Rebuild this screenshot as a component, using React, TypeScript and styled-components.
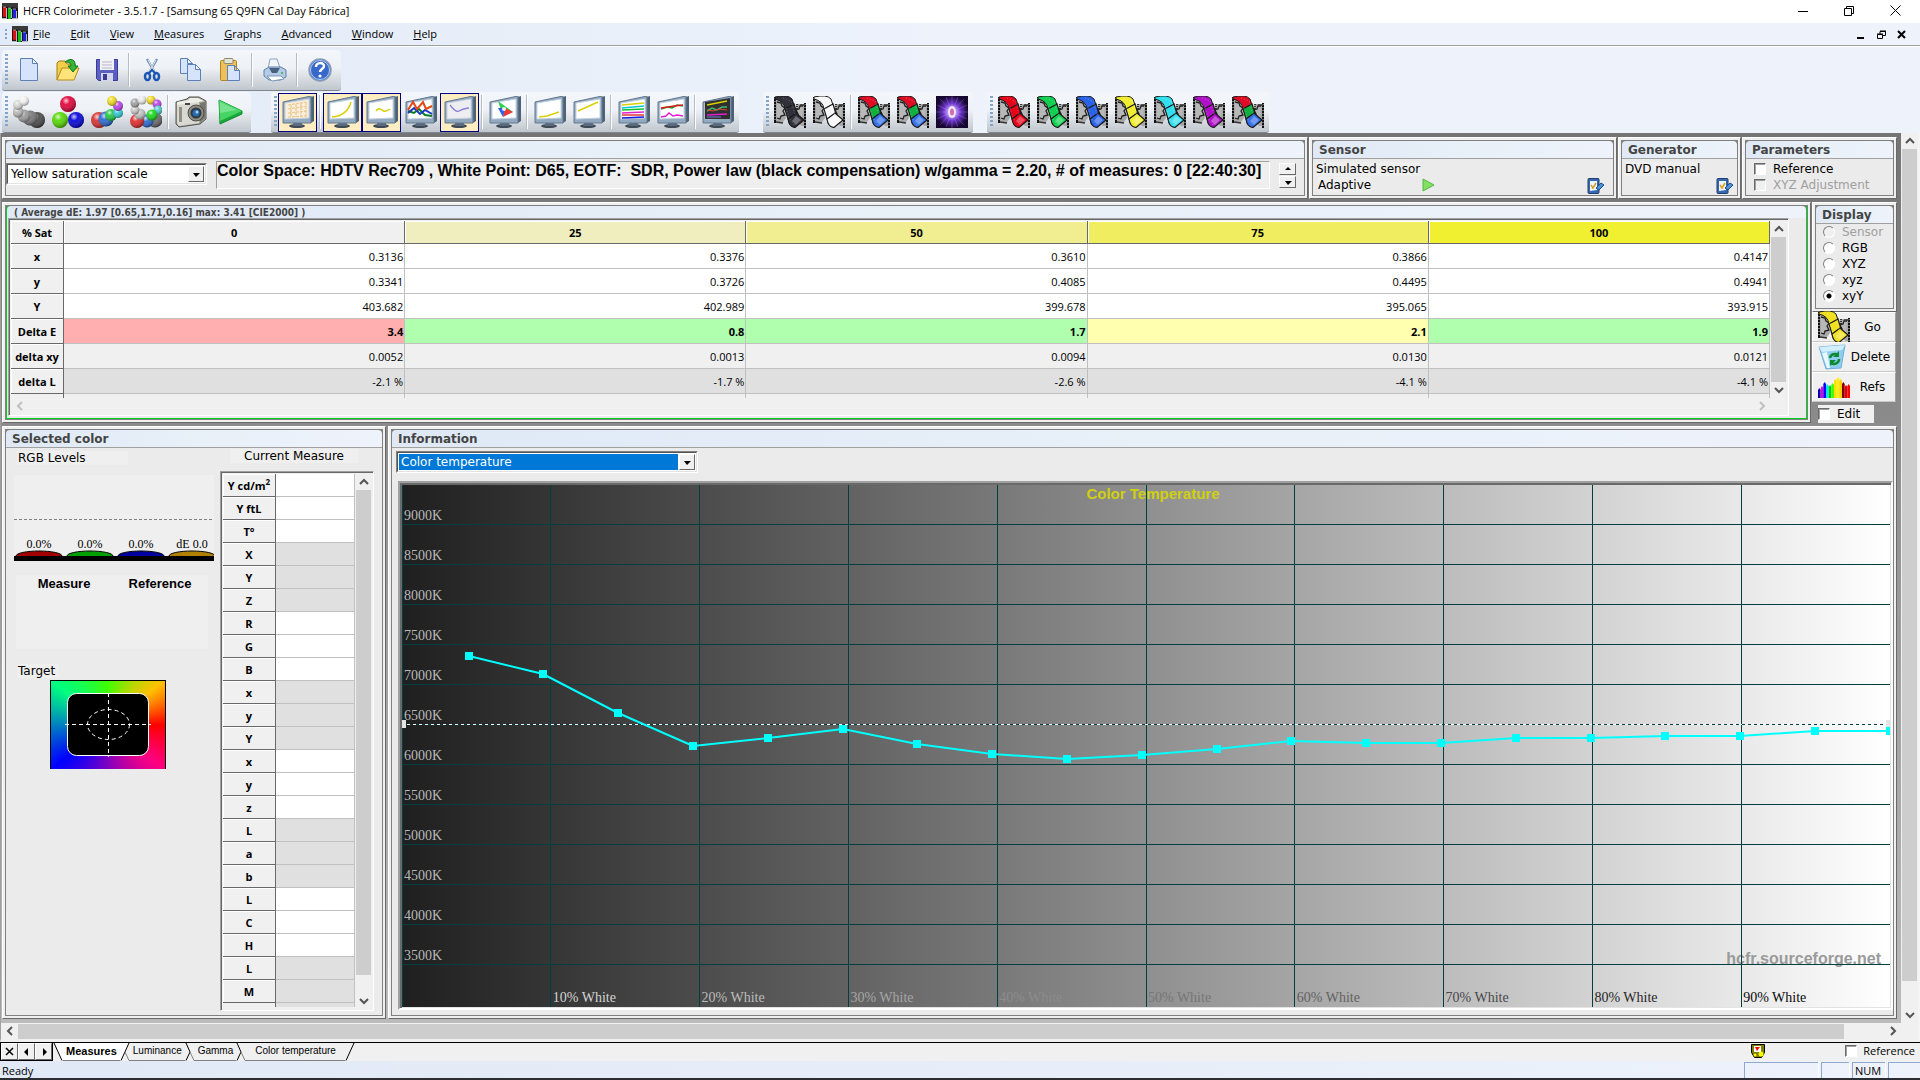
import React, { useEffect, useId, useRef, useState } from "react";
import styled, { createGlobalStyle, css } from "styled-components";

const UI = '"Open Sans", "Noto Sans", sans-serif';
const DIALOG = '"DejaVu Sans", sans-serif';
const ARIAL = '"Liberation Sans", sans-serif';
const SERIF = '"Liberation Serif", serif';

const GlobalStyle = createGlobalStyle`
  * { box-sizing: border-box; }
  body { margin: 0; background: #f0f0f0; color: #000; font-family: ${UI}; font-size: 11px; }
  button, select, input { font: inherit; color: inherit; margin: 0; }
  button { padding: 0; border: 0; background: none; }
  svg { display: block; }
`;

/* ---------- window frame ---------- */

const Window = styled.div`
  display: flex;
  flex-direction: column;
  min-height: 100vh;
`;

const TitleBar = styled.header`
  display: flex;
  align-items: center;
  height: 23px;
  padding: 0 0 2px 2px;
  background: #fff;
`;

const Title = styled.h1`
  flex: 1;
  margin: 0;
  padding-left: 5px;
  font-size: 11px;
  font-weight: 400;
`;

const CaptionButton = styled.button`
  display: grid;
  place-items: center;
  width: 46px;
  height: 20px;
`;

const CaptionGroup = styled.div`
  display: flex;
  padding-right: 2px;
`;

const MenuBar = styled.nav`
  display: flex;
  align-items: center;
  height: 24px;
  padding: 0 9px 1px 5px;
  border-bottom: 1px solid #fff;
  box-shadow: inset 0 -1px #a0a0a0;
  background: linear-gradient(90deg, #e2ebf7, #edf2fb 50%);
`;

const MenuItems = styled.div`
  display: flex;
  flex: 1;
  gap: 20px;
  padding-left: 5px;
`;

const MenuItem = styled.button`
  font-size: 11px;
  line-height: 16px;
  &::first-letter { text-decoration: underline; }
`;

const MdiButton = styled.button`
  display: grid;
  place-items: center;
  width: 20px;
  height: 16px;
`;

/* ---------- toolbars ---------- */

const ToolArea = styled.div`
  display: grid;
  gap: 1px;
  padding: 3px 2px 0;
  background: linear-gradient(90deg, #e2ebf7, #edf2fb 50%);
`;

const ToolLine = styled.div`
  display: flex;
`;

const ToolGroup = styled.div<{ $gap?: number }>`
  display: flex;
  align-items: center;
  height: 41px;
  margin-left: ${(p) => p.$gap ?? 0}px;
  padding-right: 2px;
  border-bottom: 1px solid #7f868e;
  border-radius: 4px 4px 3px 3px;
  background: linear-gradient(#f3f6fb, #eef1f5 45%, #bfc6cd);
`;

const Grip = styled.span`
  width: 3px;
  height: 32px;
  margin: 0 1px 0 3px;
  background: repeating-linear-gradient(#7fa5cc 0 2px, transparent 2px 4px);
`;

const ToolButton = styled.button<{ $on?: boolean }>`
  display: grid;
  place-items: center;
  width: 39px;
  height: 39px;
  ${(p) => p.$on && css`
    border: 1px solid #000080;
    background: #ffedc2;
  `}
`;

const ToolGap = styled.span`
  width: 1px;
  height: 34px;
  margin: 0 3px 0 2px;
  background: #b5bcc4;
  box-shadow: 1px 0 #fff;
`;

/* ---------- workspace ---------- */

const Workspace = styled.main`
  display: flex;
  flex: 1;
  flex-direction: column;
  border-left: 1px solid #a0a0a0;
  border-right: 2px solid #f4f4f4;
  border-bottom: 3px solid #f0f0f0;
`;

const WorkspaceBody = styled.div`
  display: flex;
  flex: 1;
`;

const Panes = styled.div`
  display: flex;
  flex: 1;
  min-width: 0;
  flex-direction: column;
  gap: 3px;
  padding: 4px 4px 4px 1px;
  background: linear-gradient(#747474, #bbb);
`;

const PaneRow = styled.div<{ $grow?: boolean; $gap?: number }>`
  display: flex;
  flex: ${(p) => (p.$grow ? "1 0 auto" : "none")};
  gap: ${(p) => p.$gap ?? 1}px;
`;

const PanelOuter = styled.section<{ $width?: number }>`
  display: flex;
  flex: ${(p) => (p.$width ? `0 0 ${p.$width}px` : "1 1 0")};
  min-width: 0;
  padding: 2px;
  border: 1px solid;
  border-color: #fff #696969 #696969 #fff;
  background: #f0f0f0;
`;

const PanelInner = styled.div<{ $accent?: boolean }>`
  display: flex;
  flex: 1;
  min-width: 0;
  flex-direction: column;
  border: 1px solid #808080;
  background: #808080;
  ${(p) => p.$accent && css`
    box-shadow: inset 1px 0 #00d020, inset -1px -1px #00d020;
    padding: 0 1px 1px;
  `}
`;

const PanelTitle = styled.h2<{ $small?: boolean }>`
  flex: none;
  height: ${(p) => (p.$small ? 12 : 18)}px;
  margin: 0;
  padding-left: ${(p) => (p.$small ? 7 : 6)}px;
  overflow: hidden;
  border-bottom: ${(p) => (p.$small ? 0 : 1)}px solid #a0a0a0;
  border-radius: 4px 4px 0 0;
  background: linear-gradient(90deg, #dfe9f6, #e8f0f8 50%, #eef2fb);
  color: #444;
  font: 700 12px/18px ${DIALOG};
  white-space: nowrap;
  ${(p) => p.$small && css`
    font: 700 10px/14px "DejaVu Sans Condensed", ${DIALOG};
  `}
`;

const PanelBody = styled.div`
  flex: 1;
  min-width: 0;
  background: #ebebeb;
  font: 12px/16px ${DIALOG};
`;

function Panel(props: { title: string; width?: number; accent?: boolean; children: React.ReactNode }) {
  return (
    <PanelOuter $width={props.width}>
      <PanelInner $accent={props.accent}>
        <PanelTitle $small={props.accent}>{props.title}</PanelTitle>
        {props.children}
      </PanelInner>
    </PanelOuter>
  );
}

/* ---------- form controls ---------- */

const SelectBox = styled.div<{ $width: number }>`
  position: relative;
  width: ${(p) => p.$width}px;
  height: 22px;
  border: 1px solid;
  border-color: #808080 #fff #fff #808080;
`;

const SelectInput = styled.select<{ $active?: boolean }>`
  appearance: none;
  width: 100%;
  height: 20px;
  padding: 0 18px 0 3px;
  border: 1px solid;
  border-color: #555 #e3e3e3 #e3e3e3 #555;
  border-radius: 0;
  outline: 0;
  background: #fff;
  font: 12px/16px ${DIALOG};
  ${(p) => p.$active && css`
    background: linear-gradient(#0078d7, #0078d7) 1px 1px / calc(100% - 19px) 16px no-repeat #fff;
    color: #fff;
  `}
`;

const raised = css`
  border: 1px solid;
  border-color: #fff #696969 #696969 #fff;
  background: #f0f0f0;
`;

const SelectArrow = styled.span`
  position: absolute;
  top: 2px;
  right: 2px;
  display: grid;
  place-items: center;
  width: 16px;
  height: 16px;
  pointer-events: none;
  ${raised}
`;

function Drop(props: { label: string; options: string[]; width: number; active?: boolean }) {
  return (
    <SelectBox $width={props.width}>
      <SelectInput aria-label={props.label} $active={props.active}>
        {props.options.map((o) => <option key={o}>{o}</option>)}
      </SelectInput>
      <SelectArrow aria-hidden>
        <Triangle dir="down" />
      </SelectArrow>
    </SelectBox>
  );
}

const Tick = styled.input<{ $off?: boolean }>`
  appearance: none;
  flex: none;
  width: 12px;
  height: 12px;
  border: 1px solid;
  border-color: #696969 #fff #fff #696969;
  box-shadow: inset 1px 1px #a0a0a0;
  background: ${(p) => (p.$off ? "#f0f0f0" : "#fff")};
  &:checked { background: #000; }
`;

const Radio = styled.input<{ $off?: boolean }>`
  appearance: none;
  flex: none;
  width: 12px;
  height: 12px;
  border: 1px solid;
  border-color: #808080 #fff #fff #808080;
  border-radius: 50%;
  background: ${(p) => (p.$off ? "#f0f0f0" : "#fff")};
  &:checked { background: radial-gradient(circle, #000 0 2px, #fff 3px); }
`;

const Choice = styled.label<{ $off?: boolean; $gap?: number }>`
  display: flex;
  align-items: center;
  gap: ${(p) => p.$gap ?? 7}px;
  color: ${(p) => (p.$off ? "#a0a0a0" : "#000")};
`;

const Field = styled.span`
  background: #efefef;
`;

/* ---------- top panels ---------- */

const ViewBody = styled(PanelBody)`
  display: flex;
  align-items: flex-start;
  gap: 9px;
  padding: 2px 8px 6px 0;
`;

const ViewSelect = styled.div`
  padding-top: 2px;
`;

const Summary = styled.output`
  flex: 1;
  height: 28px;
  min-width: 0;
  overflow: hidden;
  border: 1px solid;
  border-color: #a0a0a0 #fff #fff #a0a0a0;
  background: #efefef;
  font: 700 16px/18px ${ARIAL};
  white-space: pre;
`;

const Spinner = styled.div`
  display: grid;
  gap: 1px;
  padding-top: 2px;
`;

const SpinButton = styled.button`
  display: grid;
  place-items: center;
  width: 17px;
  height: 12px;
  ${raised}
`;

const DeviceBody = styled(PanelBody)<{ $right: number }>`
  padding: 2px ${(p) => p.$right}px 0 3px;
`;

const DeviceLine = styled.div`
  display: flex;
  align-items: flex-start;
  justify-content: space-between;
`;

const DeviceMode = styled.div`
  display: flex;
  align-items: center;
  gap: 51px;
  padding-left: 2px;
`;

const ParamBody = styled(PanelBody)`
  padding: 2px 0 0 8px;
`;

/* ---------- measures table ---------- */

const MeasureBody = styled(PanelBody)`
  padding: 0 17px 2px 1px;
`;

const Sunken = styled.div`
  border: 1px solid;
  border-color: #a0a0a0 #fff #fff #a0a0a0;
  box-shadow: inset 1px 1px #696969;
  padding: 2px 1px 1px 2px;
  background: #f0f0f0;
`;

const GridWithBar = styled.div`
  display: flex;
`;

const DataTable = styled.table`
  flex: 1;
  width: 100%;
  table-layout: fixed;
  border-collapse: separate;
  border-spacing: 0;
  font: 11px/15px ${UI};
`;

const HeadCell = styled.th<{ $bg?: string; $first?: boolean; $rowH?: number }>`
  width: ${(p) => (p.$first ? "53px" : "auto")};
  height: ${(p) => p.$rowH ?? 25}px;
  padding: 0;
  overflow: hidden;
  border-right: 1px solid #696969;
  border-bottom: 1px solid #696969;
  box-shadow: inset 1px 1px #fff;
  background: ${(p) => p.$bg ?? "#f0f0f0"};
  font-weight: 700;
`;

const Cell = styled.td<{ $bg: string; $bold?: boolean }>`
  padding: 0 1px 0 0;
  border-right: 1px solid #c0c0c0;
  border-bottom: 1px solid #c0c0c0;
  background: ${(p) => p.$bg};
  font-weight: ${(p) => (p.$bold ? 700 : 400)};
  text-align: right;
`;

const StubCell = styled.td<{ $head?: boolean; $bg?: string }>`
  height: 4px;
  padding: 0;
  border-right: 1px solid ${(p) => (p.$head ? "#696969" : "#c0c0c0")};
  background: ${(p) => p.$bg ?? "#f0f0f0"};
`;

/* ---------- scroll bars ---------- */

const VBar = styled.div`
  display: flex;
  flex: none;
  width: 17px;
  padding: 0 1px;
  flex-direction: column;
  background: #f0f0f0;
`;

const HBar = styled.div`
  display: flex;
  flex: none;
  height: 16px;
  background: #f0f0f0;
`;

const BarArrow = styled.button`
  display: grid;
  flex: none;
  place-items: center;
  width: 17px;
  height: 16px;
  align-self: center;
`;

const Thumb = styled.div<{ $end?: number }>`
  flex: 1;
  margin: ${(p) => `1px ${p.$end ?? 0}px 0 0`};
  background: #cdcdcd;
`;

const VThumb = styled.div<{ $end?: number }>`
  flex: 1;
  margin-bottom: ${(p) => p.$end ?? 0}px;
  background: #cdcdcd;
`;

const BarSpace = styled.div`
  flex: 1;
`;

function Chevron({ dir, color = "#555" }: { dir: "up" | "down" | "left" | "right"; color?: string }) {
  const d = { up: "M1 7L5 3L9 7", down: "M1 3L5 7L9 3", left: "M7 1L3 5L7 9", right: "M3 1L7 5L3 9" }[dir];
  return <svg width="10" height="10" viewBox="0 0 10 10"><path d={d} fill="none" stroke={color} strokeWidth="2" /></svg>;
}

function Triangle({ dir }: { dir: "up" | "down" | "left" | "right" }) {
  const d = { up: "M1 5H7L4 2Z", down: "M1 3H8L4 7Z", left: "M5 0V8L1 4Z", right: "M3 0V8L7 4Z" }[dir];
  return <svg width="8" height="8" viewBox="0 0 8 8"><path d={d} fill="#000" /></svg>;
}

/* ---------- side column ---------- */

const SideColumn = styled.div`
  display: flex;
  flex: 0 0 85px;
  flex-direction: column;
`;

const DisplayBody = styled(PanelBody)`
  padding-left: 7px;
`;

const ActionButton = styled.button`
  display: flex;
  align-items: center;
  width: 84px;
  height: 30px;
  padding-left: 5px;
  background: #f0f0f0;
  border: 1px solid;
  border-color: #fff #a0a0a0 #c8c8c8 #fff;
  font: 12px/16px ${DIALOG};
`;

const ActionText = styled.span`
  flex: 1;
  text-align: center;
`;

const EditBox = styled.div`
  margin: 3px 0 0 6px;
  width: 56px;
  background: #f0f0f0;
  font: 12px/18px ${DIALOG};
`;

/* ---------- selected colour panel ---------- */

const ColorBody = styled(PanelBody)`
  display: flex;
  gap: 6px;
  padding: 1px 8px 4px 8px;
`;

const ColorLeft = styled.div`
  flex: 1;
  min-width: 0;
`;

const ColorCaption = styled.div<{ $width: number; $top: number }>`
  width: ${(p) => p.$width}px;
  margin: ${(p) => p.$top}px 0 0 3px;
  padding-left: 1px;
  background: #efefef;
  line-height: 14px;
`;

const LevelBox = styled.div`
  margin-top: 10px;
  background: #efefef;
`;

const CompareBox = styled.div`
  display: grid;
  grid-template-columns: 1fr 1fr;
  width: 192px;
  height: 74px;
  margin: 14px 0 0 2px;
  background: #efefef;
  font: 700 13px/18px ${ARIAL};
  text-align: center;
`;

const TargetBox = styled.div`
  margin: 2px 0 0 36px;
`;

const ColorRight = styled.div`
  display: flex;
  flex: 0 0 154px;
  flex-direction: column;
`;

const CurrentCaption = styled.div`
  width: 128px;
  margin: 0 0 8px 10px;
  background: #efefef;
  line-height: 14px;
  text-align: center;
`;

const ValueFrame = styled(Sunken)`
  display: flex;
  flex: 1;
`;

const ValueTable = styled(DataTable)`
  align-self: flex-start;
`;

/* ---------- information panel ---------- */

const InfoBody = styled(PanelBody)`
  display: flex;
  flex-direction: column;
  padding: 3px 0 5px 4px;
`;

const ChartFrame = styled.div`
  display: flex;
  flex: 1;
  margin: 8px 0 0 2px;
  border: 2px solid;
  border-color: #a0a0a0 #fff #fff #a0a0a0;
  box-shadow: inset 2px 2px #696969, inset -1px -1px #e3e3e3;
  padding: 2px 1px 1px 2px;
`;

const ChartSvg = styled.svg`
  flex: 1 1 0;
  width: 0;
  min-height: 320px;
  background: linear-gradient(90deg, #1f1f1f, #fff);
`;

/* ---------- bottom bars ---------- */

const TabBar = styled.div`
  display: flex;
  align-items: flex-start;
  height: 19px;
  border-top: 1px solid #000;
  background: #f0f0f0;
`;

const TabScroll = styled.div`
  display: flex;
  border-right: 1px solid #000;
  border-bottom: 1px solid #000;
  border-left: 1px solid #000;
`;

const TabScrollButton = styled.button`
  display: grid;
  place-items: center;
  width: 17px;
  height: 17px;
  ${raised}
`;

const Tab = styled.button<{ $on?: boolean; $pad: number }>`
  height: 18px;
  padding: 0 ${(p) => p.$pad}px 1px;
  border-bottom: 1px solid #808080;
  background: ${(p) => (p.$on ? "#fff" : "#f0f0f0")};
  font: ${(p) => (p.$on ? "700 11px" : "400 10px")}/16px ${ARIAL};
`;

const TabRest = styled.div`
  display: flex;
  flex: 1;
  align-items: center;
  justify-content: flex-end;
  gap: 80px;
  padding: 0 5px 1px 0;
  font-size: 11px;
  line-height: 16px;
`;

const StatusBar = styled.footer`
  display: flex;
  height: 19px;
  gap: 3px;
  border-bottom: 2px solid #2b2d33;
  background: linear-gradient(90deg, #e1e9f6, #edf2fb);
`;

const StatusText = styled.span`
  flex: 1;
  padding: 2px 0 0 2px;
  line-height: 15px;
`;

const StatusPane = styled.span<{ $width: number }>`
  width: ${(p) => p.$width}px;
  margin-top: 1px;
  padding-left: 2px;
  border-top: 1px solid #8fa9cc;
  border-left: 1px solid #8fa9cc;
  box-shadow: 1px 0 #fff;
  line-height: 15px;
`;

/* ---------- icons ---------- */

function AppIcon() {
  return (
    <svg width="16" height="16" viewBox="0 0 16 16">
      <rect width="16" height="16" fill="#181818" />
      <path d="M0 0H16V5L0 3Z" fill="#3a3a3a" />
      <rect x="1" y="4" width="3" height="10" rx="1" fill="#e01010" />
      <rect x="6" y="5" width="3" height="11" rx="1" fill="#10c010" />
      <rect x="11" y="6" width="3" height="9" rx="1" fill="#2020e8" />
      <path d="M0 15.500h5M10 15.500h6M4.500 5v10M9.500 6v9M14.500 8v7" stroke="#fff" strokeOpacity=".7" />
      <path d="M1 4h3M6 5h3M11 6h3" stroke="#fff" strokeOpacity=".5" />
    </svg>
  );
}

const Page = ({ x, y, w, h }: { x: number; y: number; w: number; h: number }) => (
  <path d={`M${x} ${y}h${w - 5}l5 5v${h - 5}h${-w}Z M${x + w - 5} ${y}v5h5`} fill="#d5e4fa" stroke="#5d80b8" />
);

function FileIcon({ kind }: { kind: string }) {
  return (
    <svg width="24" height="24" viewBox="0 0 24 24">
      {kind === "New" && <Page x={3.5} y={0.5} w={17} h={22} />}
      {kind === "Open" && (
        <>
          <path d="M1 22V5l2-2h6l2 3h8v5" fill="#f2cf4b" stroke="#a87c10" />
          <path d="M1 22L6 10H23L18 22Z" fill="#fde47a" stroke="#b98a15" />
          <path d="M9 4C15-1 20 2 19 8h3l-5 6-5-6h3C15 5 13 4 9 4Z" fill="#35b53a" stroke="#12781a" />
        </>
      )}
      {kind === "Save" && (
        <>
          <path d="M1.500 1.500h21v21h-19l-2-2Z" fill="#5a5fc0" stroke="#383c94" />
          <rect x="5" y="1" width="14" height="11" fill="#f1f1f6" />
          <path d="M7 4h10M7 7h10M7 10h10" stroke="#b6b6c4" />
          <rect x="6" y="15" width="12" height="8" fill="#d4d6ec" />
          <rect x="8" y="16" width="4" height="6" fill="#383c94" />
        </>
      )}
      {kind === "Cut" && (
        <>
          <path d="M7 1L15 15M17 1L9 15" stroke="#7894b4" strokeWidth="2.500" />
          <path d="M8 2L15 14M16 2L9 14" stroke="#dce6f0" />
          <ellipse cx="7.500" cy="18.500" rx="2.500" ry="3.500" fill="none" stroke="#1b56b4" strokeWidth="2.500" />
          <ellipse cx="16.500" cy="18.500" rx="2.500" ry="3.500" fill="none" stroke="#1b56b4" strokeWidth="2.500" />
          <path d="M9 15l3-3 3 3" stroke="#1b56b4" strokeWidth="2" fill="none" />
        </>
      )}
      {kind === "Copy" && <><Page x={1.5} y={0.5} w={12} h={15} /><Page x={8.5} y={6.5} w={13} h={16} /></>}
      {kind === "Paste" && (
        <>
          <rect x="2.500" y="2.500" width="16" height="20" rx="1" fill="#eec05a" stroke="#b5841e" />
          <rect x="6" y="0.500" width="9" height="5" rx="1" fill="#e4e4d8" stroke="#8e8a70" />
          <Page x={9.5} y={7.5} w={12} h={15} />
        </>
      )}
      {kind === "Print" && (
        <>
          <path d="M5 11L7 1h7l3 9Z" fill="#f3f7fc" stroke="#8aa2c4" />
          <path d="M1 12l5-3h12l5 3v7l-6 3H6l-5-4Z" fill="#b4cbe6" stroke="#5f80ac" />
          <path d="M6 10h11l-3 5H9Z" fill="#48617f" />
          <path d="M4 18l14 0 3 3-12 2Z" fill="#fff" stroke="#7b97bc" />
          <circle cx="19" cy="15" r="1" fill="#3ab54a" />
        </>
      )}
      {kind === "Help" && (
        <>
          <circle cx="12" cy="12" r="11" fill="#3868cc" stroke="#8c9db8" strokeWidth="1.500" />
          <circle cx="12" cy="12" r="9.500" fill="none" stroke="#b4cdf2" />
          <path d="M8 9c0-5 8-5 8-1 0 3-4 3-4 6" fill="none" stroke="#fff" strokeWidth="2.500" />
          <circle cx="12" cy="18" r="1.600" fill="#fff" />
        </>
      )}
    </svg>
  );
}

function Balls({ items }: { items: [number, number, number, string][] }) {
  const id = useId();
  return (
    <svg width="32" height="32" viewBox="0 0 32 32">
      <defs>
        <radialGradient id={id} cx="38%" cy="30%" r="70%">
          <stop offset="0" stopColor="#fff" stopOpacity=".8" />
          <stop offset=".35" stopColor="#fff" stopOpacity=".08" />
          <stop offset="1" stopColor="#000" stopOpacity=".4" />
        </radialGradient>
      </defs>
      {items.map(([x, y, r, fill], i) => (
        <g key={i}>
          <circle cx={x} cy={y} r={r} fill={fill} />
          <circle cx={x} cy={y} r={r} fill={`url(#${id})`} />
        </g>
      ))}
    </svg>
  );
}

const BALLS: Record<string, [number, number, number, string][]> = {
  "Grey scale": [[24, 24, 8, "#484848"], [17, 22, 7.5, "#757575"], [11, 20, 6.5, "#9a9a9a"], [5, 16, 5.5, "#b8b8b8"], [5, 9, 5, "#d4d4d4"], [11, 5, 5, "#f0f0f0"]],
  Primaries: [[16, 8, 8, "#e00038"], [8, 24, 8, "#52d800"], [24, 24, 8, "#0000d8"]],
  Secondaries: [[8, 24, 8, "#d83030"], [15, 23, 7.5, "#2868d0"], [20, 19, 6, "#20c840"], [27, 17, 5, "#30c8d0"], [27, 10, 5, "#b840e8"], [21, 5, 5, "#f0d820"]],
  "All colors": [[25, 24, 7.5, "#686868"], [17, 25, 6.5, "#2868d0"], [7, 25, 7, "#e02828"], [10, 18, 5.5, "#c0c0c0"], [5, 14, 4.5, "#c8c8c8"], [5, 7, 4.5, "#a0a0a0"], [12, 4, 4.5, "#e8e8e8"], [21, 4, 4.5, "#f0d820"], [27, 8, 4.5, "#b840e8"], [28, 14, 4.5, "#50c8c8"], [22, 19, 5.5, "#18d818"]],
};

function CameraIcon() {
  return (
    <svg width="32" height="32" viewBox="0 0 32 32">
      <path d="M1 6L12 3L14 1L24 1L31 5V23L25 28L4 31L1 28Z" fill="#a9a9a0" stroke="#55554f" />
      <path d="M2 8L24 5V27L4 30L2 27Z" fill="#d9d9d2" />
      <path d="M2 6L13 4L15 2L23 2L29 5L24 6L2 9Z" fill="#eeeee8" />
      <path d="M25 7L30 6V22L25 27Z" fill="#77776f" />
      <circle cx="21" cy="17" r="8" fill="#8d8d86" stroke="#4d4d48" />
      <circle cx="21" cy="17" r="5.500" fill="#303840" />
      <circle cx="21" cy="17" r="3.500" fill="#2a6ab0" />
      <circle cx="22" cy="16" r="1.500" fill="#a8d4f4" />
      <rect x="4" y="11" width="3" height="15" fill="#909088" />
      <rect x="10" y="7" width="5" height="2" fill="#444" />
    </svg>
  );
}

function PlayIcon() {
  return (
    <svg width="26" height="26" viewBox="0 0 26 26">
      <path d="M2 1L25 12V15L3 25Z" fill="#19a83a" stroke="#118a2c" />
      <path d="M2 1L25 12L3 22Z" fill="#46d465" />
      <path d="M3 3L20 11L3 14Z" fill="#8ce8a0" fillOpacity=".7" />
    </svg>
  );
}

function ReadyIcon() {
  return <svg width="13" height="14" viewBox="0 0 13 14"><path d="M1 1L12 7L1 13Z" fill="#84e060" stroke="#50b840" /></svg>;
}

const SCREENS: Record<string, React.ReactNode> = {
  Measures: <path d="M6 9l19-3M6 13l19-3M6 17l19-2M6 21l19-1M9 9v12M14 8v13M19 7v13M24 6v14" stroke="#e8c88c" strokeWidth="1.200" strokeDasharray="3 1" fill="none" />,
  Luminance: <path d="M5 21Q20 20 24 6" stroke="#d8d000" strokeWidth="1.500" fill="none" />,
  Gamma: <path d="M10 15Q13 11 16 14T24 13" stroke="#d8d000" strokeWidth="1.500" fill="none" />,
  "RGB levels": (
    <g fill="none" strokeWidth="2">
      <path d="M3 15L9 17L14 13L20 19L27 20" stroke="#0a7a20" />
      <path d="M3 17L9 12L15 18L20 14L27 18" stroke="#1838c0" />
      <path d="M3 14L8 6L12 13L18 6L21 13L27 10" stroke="#e04818" />
    </g>
  ),
  "Color temperature": <path d="M6 9Q12 17 15 15T25 12" stroke="#8a80d8" strokeWidth="1.300" fill="none" />,
  "CIE diagram": (
    <g>
      <path d="M9 5L14 20L24 16Z" fill="#30d050" />
      <path d="M14 21L24 16L16 12Z" fill="#f03838" />
      <path d="M9 12L14 21L16 12Z" fill="#3060f0" />
      <circle cx="15" cy="13" r="2" fill="#f4f4f4" />
    </g>
  ),
  "Near black": <path d="M5 21L13 20L25 16" stroke="#d8d000" strokeWidth="1.500" fill="none" />,
  "Near white": <path d="M5 15L25 6" stroke="#d8d000" strokeWidth="1.500" fill="none" />,
  "Saturation luminance": (
    <g fill="none" strokeWidth="1.300">
      <path d="M4 9l22-2" stroke="#d8d000" /><path d="M4 12l22-2" stroke="#00c8d0" /><path d="M4 14l22-1" stroke="#10c030" />
      <path d="M4 17l22-1" stroke="#e020d0" /><path d="M4 19h22" stroke="#e01818" /><path d="M4 22l22-1" stroke="#1818e0" />
    </g>
  ),
  "Saturation shift": (
    <g fill="none" strokeWidth="1.500">
      <path d="M4 13l6-2 5 1 5-3 6 1" stroke="#10a030" /><path d="M4 12l7-1 6-1 9-1" stroke="#e01818" />
      <path d="M4 21l5-1 3-3 4 3 4-1 6 1" stroke="#e020d0" />
    </g>
  ),
  "Combined graph": (
    <g>
      <path d="M3 6L28 2V23L3 23Z" fill="#303030" />
      <path d="M5 9L25 5" stroke="#d8d000" strokeWidth="1.500" />
      <path d="M5 15l5-3 5 2 5-3 5 0" stroke="#40b870" strokeWidth="1.500" fill="none" />
      <path d="M5 14l6 1 6-2 8 1" stroke="#e04828" fill="none" />
      <path d="M5 19l20-1" stroke="#e020d0" strokeWidth="1.500" /><path d="M5 21h14" stroke="#7080e0" />
    </g>
  ),
};

function MonitorIcon({ name }: { name: string }) {
  const screen = name === "Measures" ? "#fbeedd" : name === "Color temperature" ? "#eeeef2" : "#fff";
  return (
    <svg width="32" height="32" viewBox="0 0 32 32">
      <ellipse cx="15" cy="30" rx="8" ry="2" fill="#3f4a57" />
      <path d="M11 25h9v5h-9Z" fill="#5b6b7d" />
      <path d="M29 1L32 0V25L29 27Z" fill="#4f6175" />
      <path d="M1 6L29 0V27H1Z" fill="#93a9c0" stroke="#62788f" />
      <path d="M3 7L27 3V22L3 23Z" fill={screen} stroke="#c4d2e0" />
      {SCREENS[name]}
    </svg>
  );
}

type Film = [string, string, string];

function FilmIcon({ film }: { film: Film }) {
  return (
    <svg width="32" height="32" viewBox="0 0 32 32">
      <path d="M2 1H8L12 22L9 26H2Z" fill="#a8a8a8" />
      <path d="M22 8H30V30H27L20 20Z" fill="#a8a8a8" />
      <path d="M3 6l4 1 1 3 3 2-2 3 2 4-4 1-1 3-3-1M29 10l-3 0-1 3-3 1 2 4 0 4 4 1" fill="#b8b8b8" stroke="#222" strokeWidth="1.300" />
      <path d="M1 1V27M31 7V32" stroke="#111" strokeWidth="2" />
      <path d="M1 2V26M31 8V31" stroke="#ddd" strokeWidth="1" strokeDasharray="1 2" />
      <path d="M23 8V14" stroke="#111" strokeWidth="1.500" strokeDasharray="1 1" />
      <path d="M2 26L9 27M26 9L31 9" stroke="#333" strokeWidth="1.500" />
      <path d="M1 1Q14-2 18 3L20 9L11 13Q10 5 1 3Z" fill={film[0]} stroke="#1a1a1a" />
      <path d="M11 13L20 8L23 18L14 23Z" fill={film[1]} stroke="#1a1a1a" strokeWidth="1.200" />
      <path d="M14 23L22 17L30 24L21 31.500Q15 31 14 23Z" fill={film[2]} stroke="#1a1a1a" strokeWidth="1.200" />
      <path d="M18 25L22 20L27 24L22 29Z" fill="#fff" fillOpacity=".3" />
      <path d="M9 2L17 5L21 18M12 12L15 22L21 30" fill="none" stroke="#fff" strokeOpacity=".3" strokeDasharray="1 2" />
    </svg>
  );
}

const mono = (c: string): Film => [c, c, c];
const RGB_FILM: Film = ["#e00c24", "#10b040", "#3470e8"];

function BurstIcon() {
  const id = useId();
  return (
    <svg width="32" height="32" viewBox="0 0 32 32">
      <defs>
        <radialGradient id={id}>
          <stop offset="0" stopColor="#fff" /><stop offset=".25" stopColor="#c49cf8" />
          <stop offset=".55" stopColor="#6a34c8" /><stop offset="1" stopColor="#160730" />
        </radialGradient>
      </defs>
      <rect width="32" height="32" fill={`url(#${id})`} />
      <path d="M16 0V32M0 16H32M4 3L28 29M28 3L4 29M10 1L22 31M22 1L10 31M1 9L31 23M1 23L31 9" stroke="#b48cf8" strokeOpacity=".3" />
      <ellipse cx="16" cy="16" rx="4" ry="6" fill="#f4e4fc" />
      <ellipse cx="16" cy="16" rx="2" ry="3.500" fill="#cc70ac" />
    </svg>
  );
}

function ConfigIcon() {
  return (
    <svg width="18" height="18" viewBox="0 0 18 18">
      <rect x="1" y="1.500" width="11" height="15" rx="1" fill="#3568b0" stroke="#203f70" />
      <path d="M3 4h7v9L3 14Z" fill="#eef4fc" />
      <path d="M4 8l2 3 3-5" stroke="#d8a020" fill="none" strokeWidth="1.500" />
      <path d="M9 11L14 6L17 8L12 13Z" fill="#4a90d8" stroke="#204a80" />
    </svg>
  );
}

function BinIcon() {
  return (
    <svg width="28" height="26" viewBox="0 0 28 26">
      <path d="M1 3L27 1L23 24L8 25Z" fill="#8fcdf0" stroke="#6cb0d8" />
      <path d="M1 3L27 1L24 6L4 8Z" fill="#d4effc" />
      <path d="M4 9L9 24L12 24L9 8Z" fill="#e8f8ff" />
      <g fill="none" stroke="#0f8a34" strokeWidth="2.500">
        <path d="M12 14a5 5 0 0 1 8-3M21 15a5 5 0 0 1-8 4" />
      </g>
      <path d="M21 7v6h-6ZM12 22v-6h6Z" fill="#0f8a34" />
    </svg>
  );
}

function SpectrumIcon() {
  const bars: [string, number][] = [["#0000a8", 12], ["#e000e0", 10], ["#0000ff", 6], ["#00e8ff", 8], ["#00d000", 9], ["#40ff00", 7], ["#ffe000", 3], ["#fff000", 1], ["#ffd000", 3], ["#800000", 6], ["#e00000", 9], ["#ff0000", 8]];
  return (
    <svg width="32" height="22" viewBox="0 0 36 22" preserveAspectRatio="none">
      {bars.map(([c, y], i) => <path key={i} d={`M${i * 3} ${y + 2}l1.500-2 1.500 2V22h-3Z`} fill={c} />)}
    </svg>
  );
}

/* ---------- drawings in the colour panel ---------- */

function LevelMeter() {
  const bars = [["0.0%", "#a00000", 25], ["0.0%", "#00a000", 76], ["0.0%", "#0000a0", 127], ["dE 0.0", "#b08000", 178]] as const;
  return (
    <svg width="200" height="86">
      <path d="M0 44.500H200" stroke="#808080" strokeDasharray="3 2" />
      {bars.map(([text, fill, x]) => (
        <g key={x}>
          <ellipse cx={x} cy="81" rx="23" ry="5" fill={fill} stroke="#000" />
          <text x={x} y="73" textAnchor="middle" fontFamily={SERIF} fontSize="12">{text}</text>
        </g>
      ))}
      <rect y="81" width="200" height="5" />
    </svg>
  );
}

const Hue = styled.div`
  display: grid;
  place-items: center;
  width: 116px;
  height: 89px;
  border: 1px solid #000;
  border-bottom: 0;
  background: conic-gradient(from 0deg at 50% 50%, #40ff00, #ffc000 52deg, #f00 90deg, #ff0080 128deg, #8000c0 180deg, #00f 232deg, #0080c0 270deg, #00ff80 308deg, #40ff00);
`;

function TargetView() {
  return (
    <Hue>
      <svg width="86" height="64">
        <rect x="2.500" y="0.500" width="81" height="62" rx="9" fill="#000" stroke="#fff" />
        <path d="M43.500 0V64M0 31.500H86" stroke="#fff" strokeDasharray="4 3" />
        <ellipse cx="43.500" cy="31.500" rx="21" ry="15" fill="none" stroke="#fff" strokeDasharray="4 3" />
      </svg>
    </Hue>
  );
}

/* ---------- temperature chart ---------- */

const TEMPERATURE_Y = [171, 189, 228, 261, 253, 244, 259, 269, 274, 270, 264, 256, 258, 258, 253, 253, 251, 251, 246, 246];
const WHITE_SHADES = ["#d4d4d4", "#bcbcbc", "#a6a6a6", "#8c8c8c", "#767676", "#626262", "#484848", "#262626", "#080808"];

function TemperatureChart() {
  const ref = useRef<SVGSVGElement>(null);
  const [size, setSize] = useState({ w: 1488, h: 520 });
  useEffect(() => {
    const el = ref.current;
    if (!el) return;
    const observer = new ResizeObserver(() => {
      const box = el.getBoundingClientRect();
      setSize({ w: box.width, h: box.height });
    });
    observer.observe(el);
    return () => observer.disconnect();
  }, []);
  const { w, h } = size;
  const points = TEMPERATURE_Y.map((y, i) => [Math.round(w * (0.0448 + 0.05027 * i)), y]);
  return (
    <ChartSvg ref={ref} role="img" aria-label="Color temperature chart">
      <g fontFamily={ARIAL} fontWeight="700">
        <text x={w / 2 + 7} y="14" textAnchor="middle" fontSize="15" fill="#d0d010">Color Temperature</text>
        <text x={w - 9} y={h - 43} textAnchor="end" fontSize="16" fill="#9a9a9a">hcfr.sourceforge.net</text>
      </g>
      <g stroke="#004040" shapeRendering="crispEdges">
        {Array.from({ length: 12 }, (_, i) => <path key={i} d={`M0 ${39.5 + 40 * i}H${w}`} />)}
        {Array.from({ length: 10 }, (_, i) => <path key={i} d={`M${Math.floor((w / 10) * i) + 0.5} 0V${h}`} />)}
      </g>
      <path d={`M5 239.500H${w}`} stroke="#fff" strokeDasharray="3 3" shapeRendering="crispEdges" />
      <g fill="#e4e4e4">
        <rect y="235" width="4" height="8" />
        <rect x={w - 4} y="235" width="4" height="8" />
      </g>
      <g fontFamily={SERIF} fontSize="14">
        {Array.from({ length: 12 }, (_, i) => (
          <text key={i} x="2" y={35 + 40 * i} fill="#b8b8b8">{`${9000 - 500 * i}K`}</text>
        ))}
        {WHITE_SHADES.map((fill, i) => (
          <text key={i} x={(w / 10) * (i + 1) + 2} y={h - 5} fill={fill}>{`${(i + 1) * 10}% White`}</text>
        ))}
      </g>
      <polyline points={points.map((p) => p.join(",")).join(" ")} fill="none" stroke="#0ff" strokeWidth="2" />
      {points.map(([x, y], i) => <rect key={i} x={x - 4} y={y - 4} width="8" height="8" fill="#0ff" />)}
    </ChartSvg>
  );
}

/* ---------- data ---------- */

const SATURATION: [string, string][] = [["0", "#f0f0f0"], ["25", "#f0eebf"], ["50", "#f0ee90"], ["75", "#f0ee60"], ["100", "#f0f030"]];

const ROWS: { name: string; values: string[]; bg: string | string[]; bold?: boolean }[] = [
  { name: "x", values: ["0.3136", "0.3376", "0.3610", "0.3866", "0.4147"], bg: "#fff" },
  { name: "y", values: ["0.3341", "0.3726", "0.4085", "0.4495", "0.4941"], bg: "#fff" },
  { name: "Y", values: ["403.682", "402.989", "399.678", "395.065", "393.915"], bg: "#fff" },
  { name: "Delta E", values: ["3.4", "0.8", "1.7", "2.1", "1.9"], bg: ["#ffafaf", "#afffaf", "#afffaf", "#ffffaf", "#afffaf"], bold: true },
  { name: "delta xy", values: ["0.0052", "0.0013", "0.0094", "0.0130", "0.0121"], bg: "#f0f0f0" },
  { name: "delta L", values: ["-2.1 %", "-1.7 %", "-2.6 %", "-4.1 %", "-4.1 %"], bg: "#e0e0e0" },
];

const VALUE_NAMES = ["cd", "Y ftL", "T°", "X", "Y", "Z", "R", "G", "B", "x", "y", "Y", "x", "y", "z", "L", "a", "b", "L", "C", "H", "L", "M"];

const Sup = styled.sup`
  font-size: 8px;
  line-height: 0;
`;

const TOOLS_FILE = [["New", "Open", "Save"], ["Cut", "Copy", "Paste"], ["Print"], ["Help"]];
const TOOLS_GRAPH = [["Measures"], ["Luminance", "Gamma", "RGB levels", "Color temperature"], ["CIE diagram"], ["Near black", "Near white"], ["Saturation luminance", "Saturation shift"], ["Combined graph"]];
const GRAPHS_ON = ["Measures", "Luminance", "Gamma", "Color temperature"];
const SWEEPS: [string, Film][] = [
  ["Red", mono("#e80018")], ["Green", mono("#10d050")], ["Blue", mono("#2a62e8")], ["Yellow", mono("#f0ec30")],
  ["Cyan", mono("#30e0f0")], ["Magenta", mono("#b010c8")], ["All", RGB_FILM],
];

function groups(list: string[][], draw: (name: string) => React.ReactNode) {
  return list.map((names, i) => (
    <React.Fragment key={i}>
      {i > 0 && <ToolGap />}
      {names.map(draw)}
    </React.Fragment>
  ));
}

function MeasureTable() {
  return (
    <DataTable>
      <thead>
        <tr>
          <HeadCell $first $rowH={23}>% Sat</HeadCell>
          {SATURATION.map(([s, bg]) => <HeadCell key={s} $bg={bg} $rowH={23}>{s}</HeadCell>)}
        </tr>
      </thead>
      <tbody>
        {ROWS.map((row) => (
          <tr key={row.name}>
            <HeadCell scope="row">{row.name}</HeadCell>
            {row.values.map((v, i) => (
              <Cell key={i} $bg={Array.isArray(row.bg) ? row.bg[i] : row.bg} $bold={row.bold}>{v}</Cell>
            ))}
          </tr>
        ))}
        <tr aria-hidden>
          <StubCell $head />
          {SATURATION.map(([s]) => <StubCell key={s} />)}
        </tr>
      </tbody>
    </DataTable>
  );
}

function CurrentValues() {
  return (
    <ValueTable>
      <tbody>
        {VALUE_NAMES.map((name, i) => (
          <tr key={i}>
            <HeadCell $first $rowH={23} scope="row">{name === "cd" ? <>Y cd/m<Sup>2</Sup></> : name}</HeadCell>
            <Cell $bg={Math.floor(i / 3) % 2 ? "#e0e0e0" : "#fff"} />
          </tr>
        ))}
        <tr aria-hidden><StubCell $head /><StubCell $bg="#e0e0e0" /></tr>
      </tbody>
    </ValueTable>
  );
}

const TabEdge = ({ kind }: { kind: "open" | "active" | "between" | "close" }) => (
  <svg width="10" height="18" viewBox="0 0 10 18">
    {kind === "open" && <><path d="M1 0L9 17.500H10V0Z" fill="#fff" /><path d="M1 0L9 17.500" stroke="#000" fill="none" /></>}
    {kind === "active" && (
      <>
        <path d="M0 0H9L1 17.500H0Z" fill="#fff" />
        <path d="M9 0L1 17.500" stroke="#000" fill="none" />
        <path d="M5 9L9 17.500H10" stroke="#808080" fill="none" />
      </>
    )}
    {kind === "between" && (
      <>
        <path d="M1 0L5 9L1 17.500" stroke="#000" fill="none" />
        <path d="M5 9L9 17.500H10" stroke="#808080" fill="none" />
      </>
    )}
    {kind === "close" && <path d="M9 0L1 17.500" stroke="#000" fill="none" />}
  </svg>
);

export default function App() {
  const [mode, setMode] = useState("xyY");
  return (
    <Window>
      <GlobalStyle />
      <TitleBar>
        <AppIcon />
        <Title>HCFR Colorimeter - 3.5.1.7 - [Samsung 65 Q9FN Cal Day Fábrica]</Title>
        <CaptionGroup>
          <CaptionButton aria-label="Minimize"><svg width="10" height="10"><path d="M0 5.500H10" stroke="#000" /></svg></CaptionButton>
          <CaptionButton aria-label="Restore"><svg width="10" height="10"><path d="M.5 2.500h7v7h-7ZM2.500 2.500v-2h7v7h-2" fill="none" stroke="#000" /></svg></CaptionButton>
          <CaptionButton aria-label="Close"><svg width="11" height="11"><path d="M.5.500L10.500 10.500M10.500.500L.5 10.500" stroke="#000" /></svg></CaptionButton>
        </CaptionGroup>
      </TitleBar>
      <MenuBar>
        <svg width="7" height="14"><path d="M1 2v10" stroke="#7fa5cc" strokeWidth="2" strokeDasharray="2 2" /></svg>
        <AppIcon />
        <MenuItems>
          {["File", "Edit", "View", "Measures", "Graphs", "Advanced", "Window", "Help"].map((m) => <MenuItem key={m}>{m}</MenuItem>)}
        </MenuItems>
        <MdiButton aria-label="Minimize document"><svg width="8" height="10"><path d="M0 9H7" stroke="#000" strokeWidth="2" /></svg></MdiButton>
        <MdiButton aria-label="Restore document"><svg width="9" height="9"><path d="M.5 4.500h5v4h-5ZM3 4V1.500h5.500v4H6M3 1h6M0 4h6" fill="none" stroke="#000" /></svg></MdiButton>
        <MdiButton aria-label="Close document"><svg width="9" height="9"><path d="M1 1L8 8M8 1L1 8" stroke="#000" strokeWidth="2" /></svg></MdiButton>
      </MenuBar>

      <ToolArea>
        <ToolLine>
          <ToolGroup>
            <Grip />
            {groups(TOOLS_FILE, (n) => <ToolButton key={n} aria-label={n}><FileIcon kind={n} /></ToolButton>)}
          </ToolGroup>
        </ToolLine>
        <ToolLine>
          <ToolGroup>
            <Grip />
            {Object.keys(BALLS).map((n) => <ToolButton key={n} aria-label={n}><Balls items={BALLS[n]} /></ToolButton>)}
            <ToolGap />
            <ToolButton aria-label="Capture"><CameraIcon /></ToolButton>
            <ToolButton aria-label="Start"><PlayIcon /></ToolButton>
          </ToolGroup>
          <ToolGroup $gap={20}>
            <Grip />
            {groups(TOOLS_GRAPH, (n) => (
              <ToolButton key={n} aria-label={n} $on={GRAPHS_ON.includes(n)}><MonitorIcon name={n} /></ToolButton>
            ))}
          </ToolGroup>
          <ToolGroup $gap={24}>
            <Grip />
            <ToolButton aria-label="Near black sweep"><FilmIcon film={mono("#30303a")} /></ToolButton>
            <ToolButton aria-label="Near white sweep"><FilmIcon film={mono("#f8f8f8")} /></ToolButton>
            <ToolGap />
            <ToolButton aria-label="Primary sweep"><FilmIcon film={RGB_FILM} /></ToolButton>
            <ToolButton aria-label="Secondary sweep"><FilmIcon film={RGB_FILM} /></ToolButton>
            <ToolButton aria-label="Contrast"><BurstIcon /></ToolButton>
          </ToolGroup>
          <ToolGroup $gap={14}>
            <Grip />
            {SWEEPS.map(([n, film]) => <ToolButton key={n} aria-label={`${n} saturation`}><FilmIcon film={film} /></ToolButton>)}
          </ToolGroup>
        </ToolLine>
      </ToolArea>

      <Workspace>
        <WorkspaceBody>
          <Panes>
            <PaneRow>
              <Panel title="View">
                <ViewBody>
                  <ViewSelect><Drop label="View" width={201} options={["Yellow saturation scale"]} /></ViewSelect>
                  <Summary>{"Color Space: HDTV Rec709 , White Point: D65, EOTF:  SDR, Power law (black compensation) w/gamma = 2.20, # of measures: 0 [22:40:30]"}</Summary>
                  <Spinner>
                    <SpinButton aria-label="Previous"><Triangle dir="up" /></SpinButton>
                    <SpinButton aria-label="Next"><Triangle dir="down" /></SpinButton>
                  </Spinner>
                </ViewBody>
              </Panel>
              <Panel title="Sensor" width={308}>
                <DeviceBody $right={8}>
                  <div><Field>Simulated sensor</Field></div>
                  <DeviceLine>
                    <DeviceMode><Field>Adaptive</Field><ReadyIcon /></DeviceMode>
                    <button aria-label="Configure sensor"><ConfigIcon /></button>
                  </DeviceLine>
                </DeviceBody>
              </Panel>
              <Panel title="Generator" width={123}>
                <DeviceBody $right={3}>
                  <div><Field>DVD manual</Field></div>
                  <DeviceLine>
                    <span />
                    <button aria-label="Configure generator"><ConfigIcon /></button>
                  </DeviceLine>
                </DeviceBody>
              </Panel>
              <Panel title="Parameters" width={155}>
                <ParamBody>
                  <Choice><Tick type="checkbox" />Reference</Choice>
                  <Choice $off><Tick type="checkbox" $off disabled />XYZ Adjustment</Choice>
                </ParamBody>
              </Panel>
            </PaneRow>

            <PaneRow>
              <Panel title="( Average dE: 1.97 [0.65,1.71,0.16] max: 3.41 [CIE2000] )" accent>
                <MeasureBody>
                  <Sunken>
                    <GridWithBar>
                      <MeasureTable />
                      <VBar>
                        <BarArrow aria-label="Scroll up"><Chevron dir="up" /></BarArrow>
                        <VThumb />
                        <BarArrow aria-label="Scroll down"><Chevron dir="down" /></BarArrow>
                      </VBar>
                    </GridWithBar>
                    <HBar>
                      <BarArrow aria-label="Scroll left"><Chevron dir="left" color="#c0c0c0" /></BarArrow>
                      <BarSpace />
                      <BarArrow aria-label="Scroll right"><Chevron dir="right" color="#c0c0c0" /></BarArrow>
                      <VBar />
                    </HBar>
                  </Sunken>
                </MeasureBody>
              </Panel>
              <SideColumn>
                <PanelOuter as="div">
                  <PanelInner>
                    <PanelTitle>Display</PanelTitle>
                    <DisplayBody>
                      {["Sensor", "RGB", "XYZ", "xyz", "xyY"].map((n) => (
                        <Choice key={n} $off={n === "Sensor"}>
                          <Radio type="radio" name="display" $off={n === "Sensor"} disabled={n === "Sensor"} checked={mode === n} onChange={() => setMode(n)} />
                          {n}
                        </Choice>
                      ))}
                    </DisplayBody>
                  </PanelInner>
                </PanelOuter>
                <ActionButton><FilmIcon film={mono("#f0e020")} /><ActionText>Go</ActionText></ActionButton>
                <ActionButton><BinIcon /><ActionText>Delete</ActionText></ActionButton>
                <ActionButton><SpectrumIcon /><ActionText>Refs</ActionText></ActionButton>
                <EditBox><Choice><Tick type="checkbox" />Edit</Choice></EditBox>
              </SideColumn>
            </PaneRow>

            <PaneRow $grow $gap={2}>
              <Panel title="Selected color" width={384}>
                <ColorBody>
                  <ColorLeft>
                    <ColorCaption $width={111} $top={2}>RGB Levels</ColorCaption>
                    <LevelBox><LevelMeter /></LevelBox>
                    <CompareBox><span>Measure</span><span>Reference</span></CompareBox>
                    <ColorCaption $width={42} $top={15}>Target</ColorCaption>
                    <TargetBox><TargetView /></TargetBox>
                  </ColorLeft>
                  <ColorRight>
                    <CurrentCaption>Current Measure</CurrentCaption>
                    <ValueFrame>
                      <CurrentValues />
                      <VBar>
                        <BarArrow aria-label="Scroll up"><Chevron dir="up" /></BarArrow>
                        <VThumb $end={18} />
                        <BarArrow aria-label="Scroll down"><Chevron dir="down" /></BarArrow>
                      </VBar>
                    </ValueFrame>
                  </ColorRight>
                </ColorBody>
              </Panel>
              <Panel title="Information">
                <InfoBody>
                  <Drop label="Information" width={302} options={["Color temperature"]} active />
                  <ChartFrame><TemperatureChart /></ChartFrame>
                </InfoBody>
              </Panel>
            </PaneRow>
          </Panes>
          <VBar>
            <BarArrow aria-label="Scroll up"><Chevron dir="up" /></BarArrow>
            <VThumb $end={26} />
            <BarArrow aria-label="Scroll down"><Chevron dir="down" /></BarArrow>
          </VBar>
        </WorkspaceBody>
        <HBar>
          <BarArrow aria-label="Scroll left"><Chevron dir="left" /></BarArrow>
          <Thumb $end={40} />
          <BarArrow aria-label="Scroll right"><Chevron dir="right" /></BarArrow>
          <VBar />
        </HBar>
      </Workspace>

      <TabBar>
        <TabScroll>
          <TabScrollButton aria-label="Close view"><svg width="9" height="9"><path d="M1 1L8 8M8 1L1 8" stroke="#000" strokeWidth="1.500" /></svg></TabScrollButton>
          <TabScrollButton aria-label="Previous tab"><Triangle dir="left" /></TabScrollButton>
          <TabScrollButton aria-label="Next tab"><Triangle dir="right" /></TabScrollButton>
        </TabScroll>
        <TabEdge kind="open" />
        <Tab $on $pad={3}>Measures</Tab>
        <TabEdge kind="active" />
        <Tab $pad={3}>Luminance</Tab>
        <TabEdge kind="between" />
        <Tab $pad={3}>Gamma</Tab>
        <TabEdge kind="between" />
        <Tab $pad={9}>Color temperature</Tab>
        <TabEdge kind="close" />
        <TabRest>
          <svg width="14" height="14" viewBox="0 0 14 14">
            <path d="M.5.500h13v8l-3 5h-7l-3-5Z" fill="#808000" stroke="#000" />
            <path d="M3 2h7v6H3Z" fill="#fff" /><path d="M4 3h5L6 7Z" fill="#f00" />
            <circle cx="10" cy="10" r="2.500" fill="#ff0" /><circle cx="4" cy="11" r="1.500" fill="#ff0" />
          </svg>
          <Choice $gap={6}><Tick type="checkbox" />Reference</Choice>
        </TabRest>
      </TabBar>
      <StatusBar>
        <StatusText>Ready</StatusText>
        <StatusPane $width={74} />
        <StatusPane $width={28} />
        <StatusPane $width={33}>NUM</StatusPane>
        <StatusPane $width={32} />
      </StatusBar>
    </Window>
  );
}
